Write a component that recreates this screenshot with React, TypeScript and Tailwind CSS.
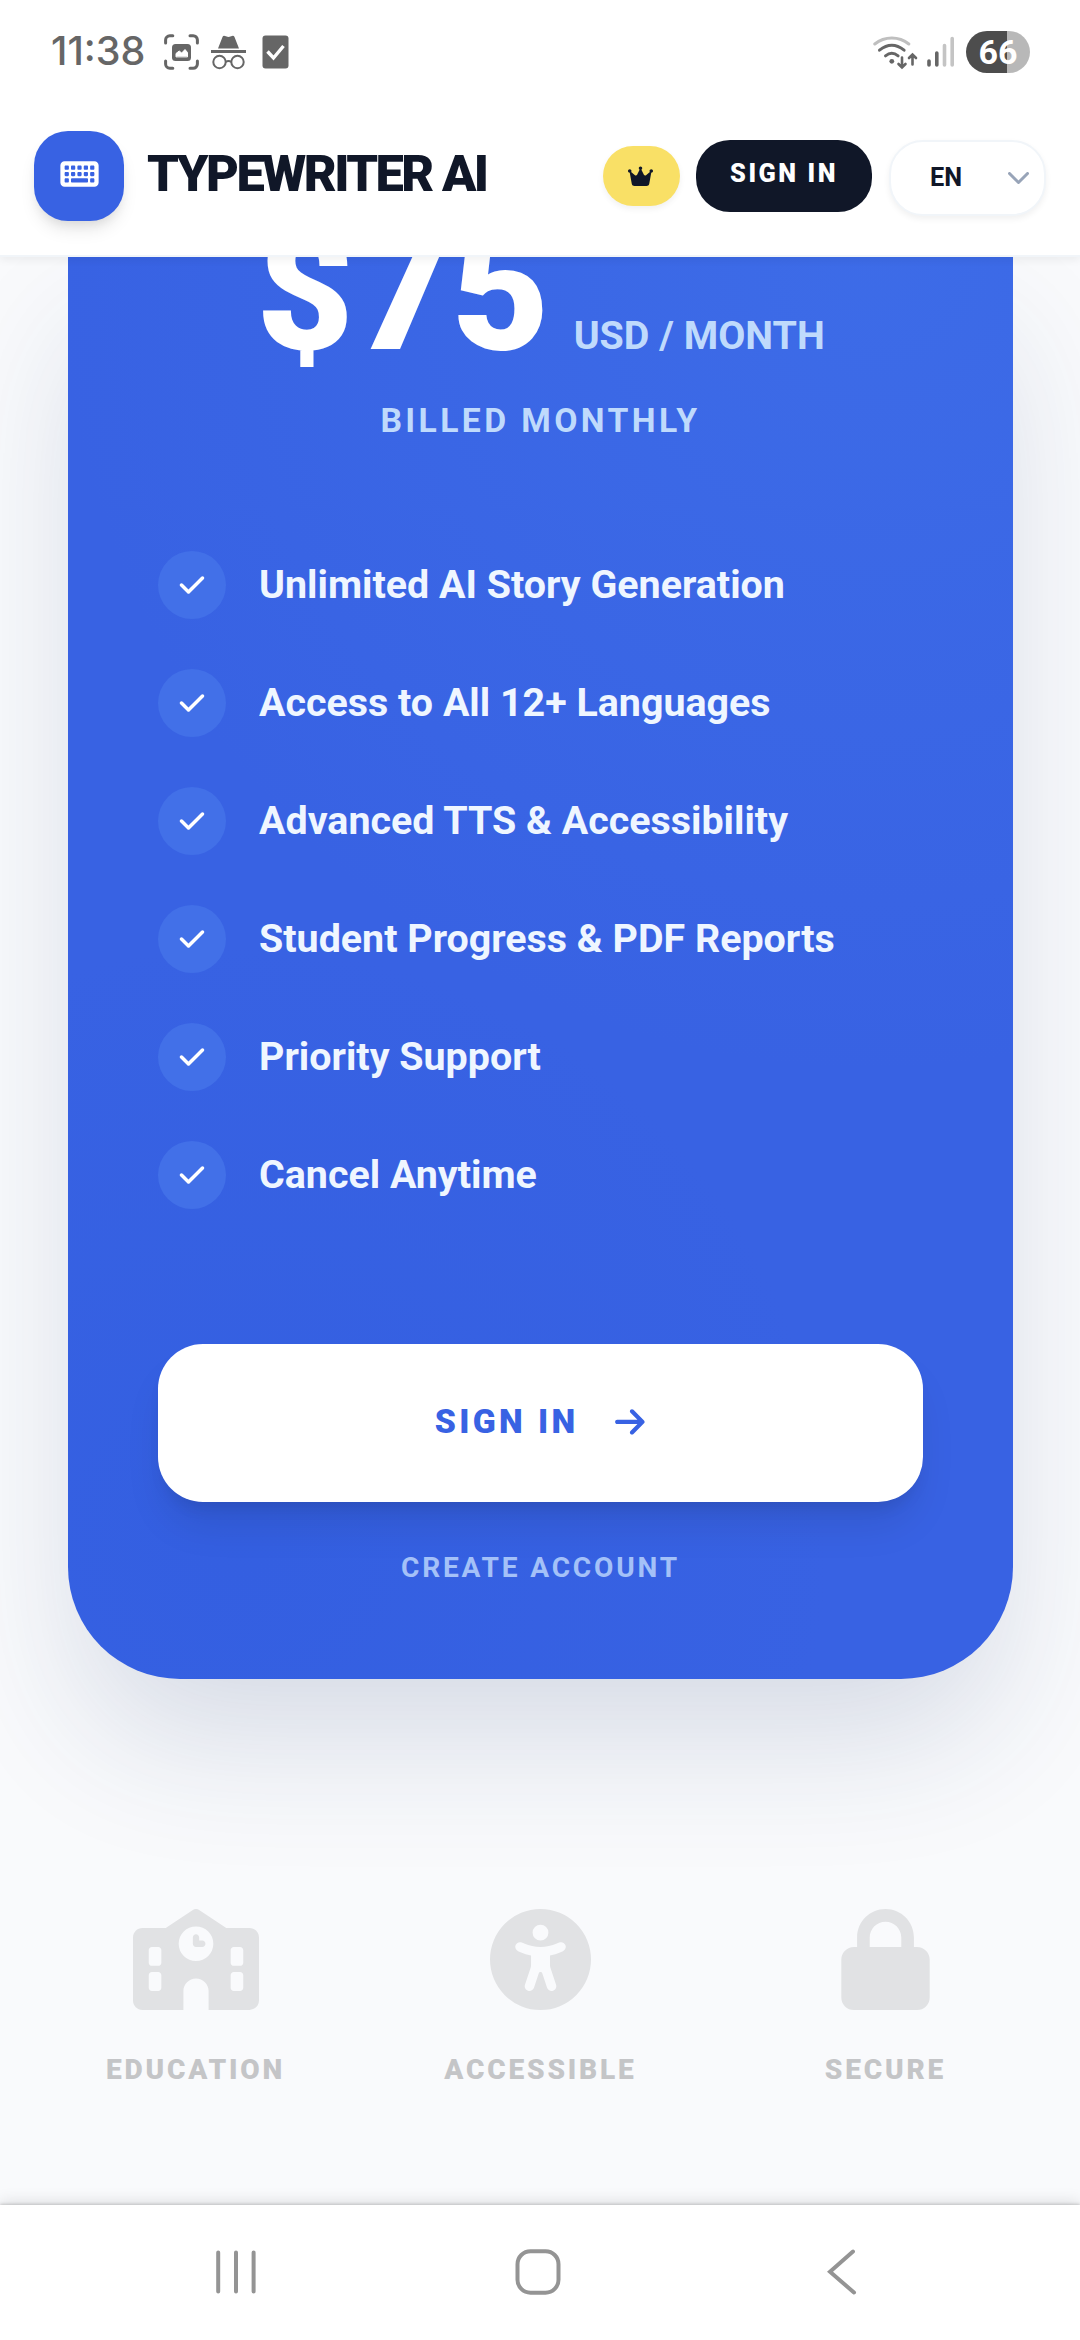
import {
  FaArrowRight,
  FaCheck,
  FaCrown,
  FaKeyboard,
  FaLock,
  FaSchool,
  FaUniversalAccess,
} from 'react-icons/fa6';

const features = [
  'Unlimited AI Story Generation',
  'Access to All 12+ Languages',
  'Advanced TTS & Accessibility',
  'Student Progress & PDF Reports',
  'Priority Support',
  'Cancel Anytime',
];

const badges = [
  { label: 'Education', icon: FaSchool, width: 'w-[126px]' },
  { label: 'Accessible', icon: FaUniversalAccess, width: 'w-[101px]' },
  { label: 'Secure', icon: FaLock, width: 'w-[89px]' },
];

function StatusBar() {
  return (
    <div className="relative z-20 flex h-[104px] shrink-0 items-center bg-white pl-[51px] pr-[50px] text-[#666]">
      <span className="w-[113px] font-['Inter'] text-[39.5px] font-medium leading-none">11:38</span>

      <svg className="h-9 w-[35px]" viewBox="0 0 35 36" fill="none" stroke="currentColor" strokeWidth="3" strokeLinecap="round">
        <path d="M1.6 9V6a4.2 4.2 0 0 1 4.2-4.2h3M26 1.8h3A4.2 4.2 0 0 1 33.4 6v3M33.4 27v3a4.2 4.2 0 0 1-4.4 4.2h-3M8.8 34.2h-3A4.2 4.2 0 0 1 1.6 30v-3" />
        <rect x="8" y="10" width="19" height="17" rx="3.5" fill="currentColor" stroke="none" />
        <path d="M12 22.5v-3l3.2-2.500 2.500 2 3.300-3.500 2.500 3v4z" fill="#fff" stroke="#fff" strokeWidth="1" />
      </svg>

      <svg className="ml-3 h-9 w-[35px]" viewBox="0 0 35 36" fill="none" stroke="currentColor" strokeWidth="2">
        <path d="M7 14.5 11.5 3q.7-1.6 2.5-1l2.5.8q1 .3 2 0L21 2q1.8-.6 2.5 1L28 14.5z" fill="currentColor" stroke="none" />
        <path d="M0 17.5h35" strokeWidth="2.8" />
        <circle cx="8.5" cy="28" r="6.2" />
        <circle cx="26.5" cy="28" r="6.2" />
        <path d="M14.5 28q3-2 6 0" />
      </svg>

      <svg className="ml-4 h-9 w-[27px]" viewBox="0 0 27 36" fill="none">
        <rect x=".5" y="1.5" width="26" height="33" rx="3" fill="#666" />
        <path d="m5.5 17.5 6 6.5 10-12" stroke="#fff" strokeWidth="3.4" />
      </svg>

      <svg className="ml-auto h-9 w-[45px]" viewBox="0 0 45 36" fill="none" stroke="currentColor" strokeWidth="3" strokeLinecap="round">
        <path d="M1.8 10a27 27 0 0 1 34 0" stroke="#bfbfbf" />
        <path d="M6.5 16.2q12.3-10 24.6 0M12.5 21.8q6.3-5 12.6 0" />
        <circle cx="18.8" cy="27.3" r="2.4" fill="currentColor" stroke="none" />
        <path d="M29 23.500v9.500M25.500 30l3.500 3.500 3.500-3.500M39.500 30.500V21M36 24l3.500-3.500L43 24" strokeWidth="2.6" />
      </svg>
      <svg className="ml-[9px] h-9 w-7" viewBox="0 0 28 36" fill="none" stroke="currentColor" strokeWidth="3.6" strokeLinecap="round">
        <path d="M2 27v4M9.8 19v12" />
        <path d="M17.5 11.5V31M25.2 4.5V31" stroke="#c4c4c4" />
      </svg>
      <div className="ml-[11px] flex h-[42px] w-16 items-center justify-center rounded-full bg-[linear-gradient(90deg,#4d4d4d_64%,#b8b8b8_64%)] text-[34px] font-bold leading-none text-white">
        66
      </div>
    </div>
  );
}

function Header() {
  return (
    <header className="relative z-10 flex h-[153px] shrink-0 items-center border-b-2 border-slate-100 bg-white px-[34px] shadow-[0_3px_8px_rgba(0,0,0,0.06)]">
      <div className="mb-2 flex size-[90px] items-center justify-center rounded-[34px] bg-[#3862e3] shadow-[0_11px_17px_-3px_rgba(0,0,0,0.1),0_6px_11px_-4px_rgba(0,0,0,0.08)]">
        <FaKeyboard className="mb-1 h-[34px] w-[39px] text-white" />
      </div>
      <h1 className="mb-[10px] ml-[23px] whitespace-nowrap text-[50.6px] font-black uppercase leading-none tracking-[-2.53px] text-[#101728]">
        Typewriter AI
      </h1>

      <button className="mb-[7px] ml-auto flex h-[60px] w-[77px] items-center justify-center rounded-full bg-[#f9e066] shadow-[0_3px_6px_rgba(0,0,0,0.06)]">
        <FaCrown className="mr-[3px] h-[22.5px] w-[25px] text-[#101728]" />
      </button>
      <button className="mb-[7px] ml-4 h-[72px] w-44 rounded-[34px] bg-[#101728] pb-1 text-[25.3px] font-black uppercase tracking-[2.53px] text-white">
        Sign In
      </button>
      <button className="mb-1 ml-[17px] flex h-[76px] w-[157px] items-center justify-between rounded-[34px] border-2 border-slate-100 bg-white pl-[39px] pr-[15px] text-[25.3px] font-bold text-[#101728] shadow-[0_3px_6px_rgba(0,0,0,0.06)]">
        EN
        <svg className="h-3 w-[21px]" viewBox="0 0 21 12" fill="none" stroke="#98a4b8" strokeWidth="3" strokeLinecap="round" strokeLinejoin="round">
          <path d="m1.5 1.5 9 9 9-9" />
        </svg>
      </button>
    </header>
  );
}

function PricingCard() {
  return (
    <section className="flex flex-col rounded-b-[112px] bg-[#3862e3] bg-[radial-gradient(circle_at_85%_0%,rgba(70,125,240,0.35),transparent_50%),radial-gradient(circle_at_18%_90%,rgba(42,88,220,0.3),transparent_40%)] px-[90px] shadow-[0_70px_140px_-14px_rgba(30,55,110,0.16)]">
      <div className="-mt-[50px] flex items-baseline justify-center gap-[24px]">
        <span className="text-[168.75px] font-black leading-none text-white">$75</span>
        <span className="text-[39.4px] font-bold uppercase text-[#bfdafc]">USD / month</span>
      </div>
      <p className="mt-[21px] text-center text-[33.75px] font-bold uppercase leading-[48px] tracking-[3.375px] text-[#bfdafc]">
        Billed Monthly
      </p>

      <ul className="mt-[106px] flex flex-col gap-[50px]">
        {features.map((feature) => (
          <li key={feature} className="flex h-[68px] items-center gap-[33px]">
            <span className="flex size-[68px] items-center justify-center rounded-full bg-[#4270e8]">
              <FaCheck className="text-[28px] text-white" />
            </span>
            <span className="whitespace-nowrap text-[39.4px] font-bold text-[#eff6ff]">{feature}</span>
          </li>
        ))}
      </ul>

      <button className="mt-[135px] flex h-[158px] items-center justify-center gap-[34px] rounded-[45px] bg-white text-[33.75px] font-black uppercase tracking-[3.375px] text-[#3862e3] shadow-[0_28px_42px_-8px_rgba(0,0,0,0.1),0_11px_17px_-8px_rgba(0,0,0,0.1)]">
        Sign In
        <FaArrowRight className="mb-[2px] text-[33.75px]" />
      </button>
      <button className="mt-[45px] mb-[90px] h-[42px] text-[28.1px] font-bold uppercase leading-[42px] tracking-[2.81px] text-[#a4c1f8]">
        Create Account
      </button>
    </section>
  );
}

function SystemNav() {
  return (
    <nav className="relative z-10 flex h-[135px] shrink-0 items-start bg-white pl-[215px] pt-11 shadow-[0_-1px_3px_rgba(0,0,0,0.18),0_-4px_14px_rgba(0,0,0,0.1)]">
      <svg className="h-[46px] w-[42px]" viewBox="0 0 42 46" stroke="#949494" strokeWidth="4" strokeLinecap="round">
        <path d="M3.2 3.5v39M21 3.5v39M38.6 3.5v39" />
      </svg>
      <svg className="ml-[258px] size-[46px]" viewBox="0 0 46 46" fill="none" stroke="#949494" strokeWidth="4">
        <rect x="2.5" y="2.2" width="41" height="41.5" rx="13" />
      </svg>
      <svg className="ml-[266px] h-[46px] w-[30px]" viewBox="0 0 30 46" fill="none" stroke="#949494" strokeWidth="4" strokeLinecap="round">
        <path d="M26 2.5 3 22.8 27 43.5" />
      </svg>
    </nav>
  );
}

export default function App() {
  return (
    <div className="flex h-[2340px] w-[1080px] flex-col overflow-hidden bg-white font-['Roboto',sans-serif]">
      <StatusBar />
      <Header />

      <main className="flex-1 overflow-hidden bg-[#f9fafc] pl-[68px] pr-[67px]">
        <PricingCard />

        {/* Trust badges */}
        <div className="mt-[230px] grid grid-cols-3 gap-[90px]">
          {badges.map(({ label, icon: Icon, width }) => (
            <div key={label} className="flex flex-col items-center gap-[39px]">
              <Icon className={`h-[101px] text-[#e1e2e4] ${width}`} />
              <span className="text-[28.1px] font-black uppercase leading-[42px] tracking-[2.81px] text-[#c4c5c7]">
                {label}
              </span>
            </div>
          ))}
        </div>
      </main>

      <SystemNav />
    </div>
  );
}
